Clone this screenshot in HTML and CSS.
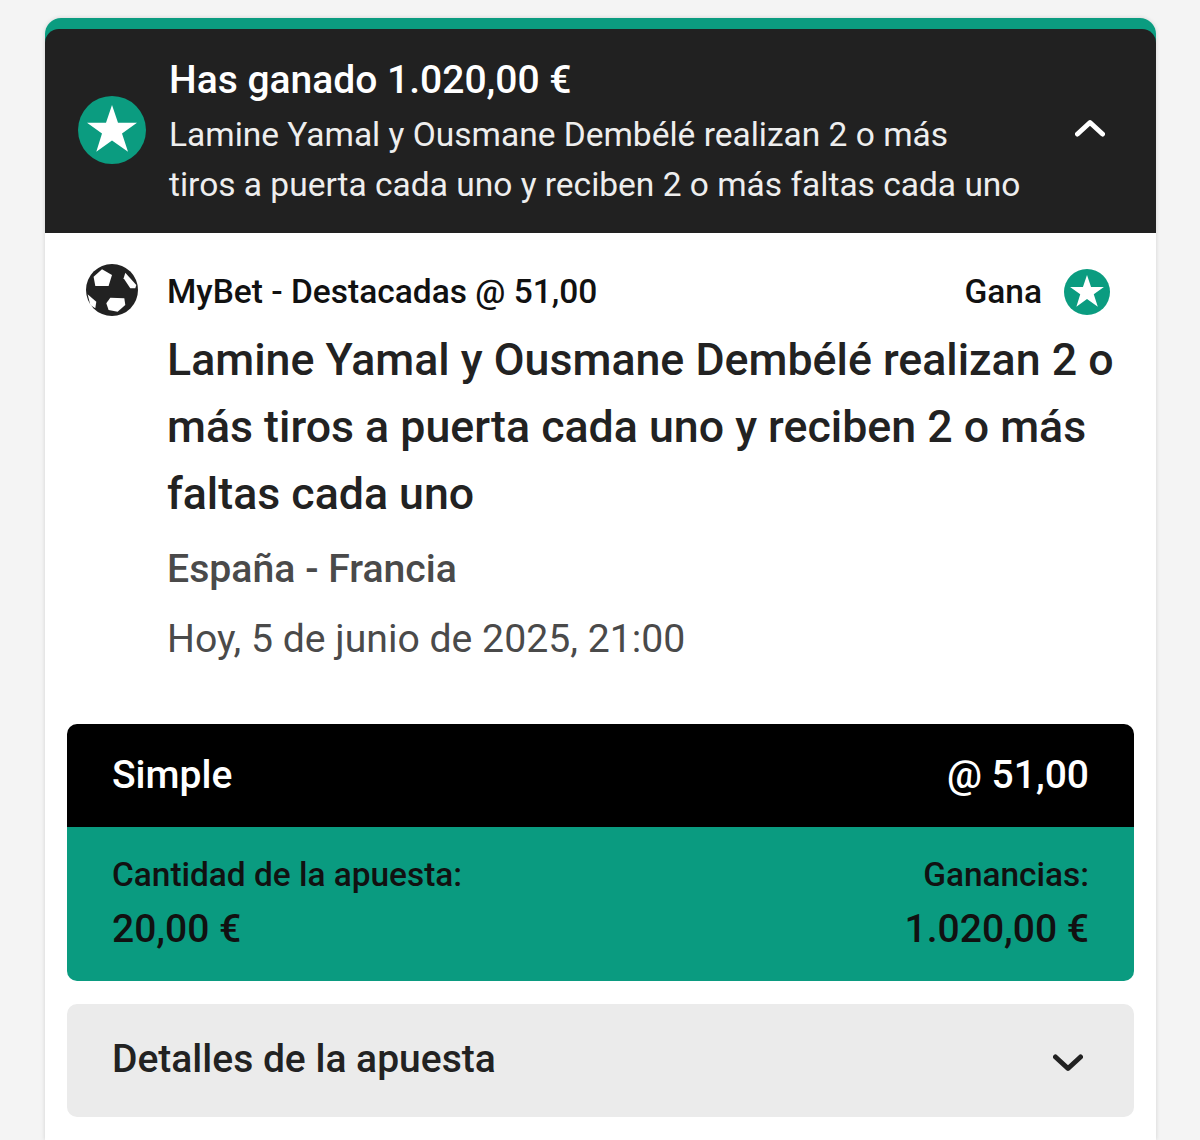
FILE: index.html
```html
<!DOCTYPE html>
<html lang="es">
<head>
    <title>Has ganado</title>
    <link rel="stylesheet" href="styles.css">
</head>
<body>
    <div class="card">
        <div class="card-top">
            <div class="header">
                <svg class="header-star" viewBox="0 0 68 68">
                    <circle cx="34" cy="34" r="34" fill="#0b9c80"/>
                    <path d="M34 9l6 17.700h19l-15 10.800 6 18.200-16-11.200-15.700 11.200 5.700-18.200-15-10.800h19z" fill="#fff"/>
                </svg>
                <div class="header-text">
                    <div class="header-title">Has ganado 1.020,00 €</div>
                    <div class="header-desc">Lamine Yamal y Ousmane Dembélé realizan 2 o más<br>tiros a puerta cada uno y reciben 2 o más faltas cada uno</div>
                </div>
                <svg class="chevron-up" viewBox="0 0 30 18">
                    <path d="M2.500 15L15 3.500 27.500 15" fill="none" stroke="#fff" stroke-width="5" stroke-linecap="round" stroke-linejoin="round"/>
                </svg>
            </div>
        </div>

        <div class="bet">
            <svg class="ball" viewBox="0 0 52 52">
                <circle cx="26" cy="26" r="26" fill="#222"/>
                <path d="M16 5.300L26 11l-3.400 11H9.300L7.600 12.700z" fill="#fff"/>
                <path d="M39.300 8.700l11 12.300-1 3.300h-5l-6.700-10z" fill="#fff"/>
                <path d="M24.300 33.700l14 .6 1 6.700-7.700 6.700-9-1.700-2.300-6.700z" fill="#fff"/>
                <path d="M1.600 30.300l8.700 7.400-1 6.600-5-3.300z" fill="#fff"/>
            </svg>
            <div class="bet-body">
                <div class="bet-top">
                    <span class="bet-type">MyBet - Destacadas @ 51,00</span>
                    <span class="bet-status">Gana</span>
                    <svg class="status-star" viewBox="0 0 68 68">
                        <circle cx="34" cy="34" r="34" fill="#0b9c80"/>
                        <path d="M34 9l6 17.700h19l-15 10.800 6 18.200-16-11.200-15.700 11.200 5.700-18.200-15-10.800h19z" fill="#fff"/>
                    </svg>
                </div>
                <div class="bet-title">Lamine Yamal y Ousmane Dembélé realizan 2 o más tiros a puerta cada uno y reciben 2 o más faltas cada uno</div>
                <div class="bet-match">España - Francia</div>
                <div class="bet-date">Hoy, 5 de junio de 2025, 21:00</div>
            </div>
        </div>

        <div class="summary">
            <div class="summary-head">
                <span class="summary-text">Simple</span>
                <span class="summary-text">@ 51,00</span>
            </div>
            <div class="summary-foot">
                <div>
                    <div class="summary-label">Cantidad de la apuesta:</div>
                    <div class="summary-value">20,00 €</div>
                </div>
                <div class="summary-right">
                    <div class="summary-label">Ganancias:</div>
                    <div class="summary-value">1.020,00 €</div>
                </div>
            </div>
        </div>

        <div class="details">
            <span class="details-label">Detalles de la apuesta</span>
            <svg class="chevron-down" viewBox="0 0 30 18">
                <path d="M2.500 3L15 14.500 27.500 3" fill="none" stroke="#222" stroke-width="5" stroke-linecap="round" stroke-linejoin="round"/>
            </svg>
        </div>
    </div>
</body>
</html>
```

FILE: styles.css
```css
html, body {
    height: 1140px;
    overflow: hidden;
}
body {
    margin: 0;
    padding: 18px 44px 0 45px;
    background: #f4f4f4;
    font-family: Roboto, Arial, sans-serif;
    color: #222;
}
.card {
    background: #fff;
    border-radius: 16px 16px 0 0;
    height: 1122px;
    box-shadow: 0 0 4px rgba(0,0,0,0.14);
}
.card-top {
    background: #0b9c80;
    border-radius: 16px 16px 0 0;
    padding-top: 11px;
}
.header {
    background: #212121;
    border-radius: 14px 14px 0 0;
    height: 204px;
    display: flex;
    align-items: center;
    color: #fff;
    box-sizing: border-box;
    padding: 0 51px 2px 33px;
}
.header-star {
    width: 68px;
    height: 68px;
    flex: none;
    margin-right: 23px;
}
.header-text {
    flex: 1;
    margin-top: 4px;
}
.header-title {
    font-size: 39px;
    font-weight: 500;
    line-height: 50px;
    margin-bottom: 5px;
}
.header-desc {
    font-size: 33.500px;
    line-height: 50px;
    color: #eee;
    white-space: nowrap;
}
.chevron-up {
    width: 30px;
    height: 18px;
    flex: none;
    margin-bottom: 4px;
}
.bet {
    display: flex;
    padding: 30px 46px 0 41px;
}
.ball {
    width: 52px;
    height: 52px;
    flex: none;
    margin: 1px 29px 0 0;
}
.bet-body {
    flex: 1;
    min-width: 0;
}
.bet-top {
    display: flex;
    align-items: center;
    height: 56px;
    font-size: 33.500px;
    font-weight: 500;
    color: #111;
}
.bet-type {
    flex: 1;
}
.status-star {
    width: 46px;
    height: 46px;
    margin: 2px 0 0 22px;
}
.bet-title {
    font-size: 44.700px;
    font-weight: 500;
    line-height: 67px;
    margin: 8px -10px 0 0;
}
.bet-match {
    font-size: 39.200px;
    font-weight: 500;
    color: #4a4a4a;
    line-height: 50px;
    margin-top: 16px;
}
.bet-date {
    font-size: 39.200px;
    color: #4a4a4a;
    line-height: 50px;
    margin-top: 20px;
}
.summary {
    margin: 60px 22px 0;
    border-radius: 10px;
    overflow: hidden;
}
.summary-head {
    background: #000;
    color: #fff;
    height: 103px;
    display: flex;
    justify-content: space-between;
    align-items: center;
    padding: 0 45px;
    font-size: 39px;
    font-weight: 500;
    box-sizing: border-box;
}
.summary-text {
    margin-bottom: 2px;
}
.summary-foot {
    background: #0a9b80;
    color: #111;
    height: 154px;
    display: flex;
    justify-content: space-between;
    padding: 25px 45px 0;
    box-sizing: border-box;
}
.summary-right {
    text-align: right;
}
.summary-label {
    font-size: 33.400px;
    font-weight: 500;
    line-height: 46px;
}
.summary-value {
    font-size: 39px;
    font-weight: 500;
    line-height: 50px;
    margin-top: 6px;
}
.details {
    margin: 23px 22px 0;
    height: 113px;
    background: #ebebeb;
    border-radius: 10px;
    display: flex;
    justify-content: space-between;
    align-items: center;
    padding: 0 51px 0 45px;
    font-size: 39px;
    font-weight: 500;
    box-sizing: border-box;
}
.details-label {
    margin-bottom: 4px;
}
.chevron-down {
    width: 30px;
    height: 18px;
    margin-top: 4px;
}
```
